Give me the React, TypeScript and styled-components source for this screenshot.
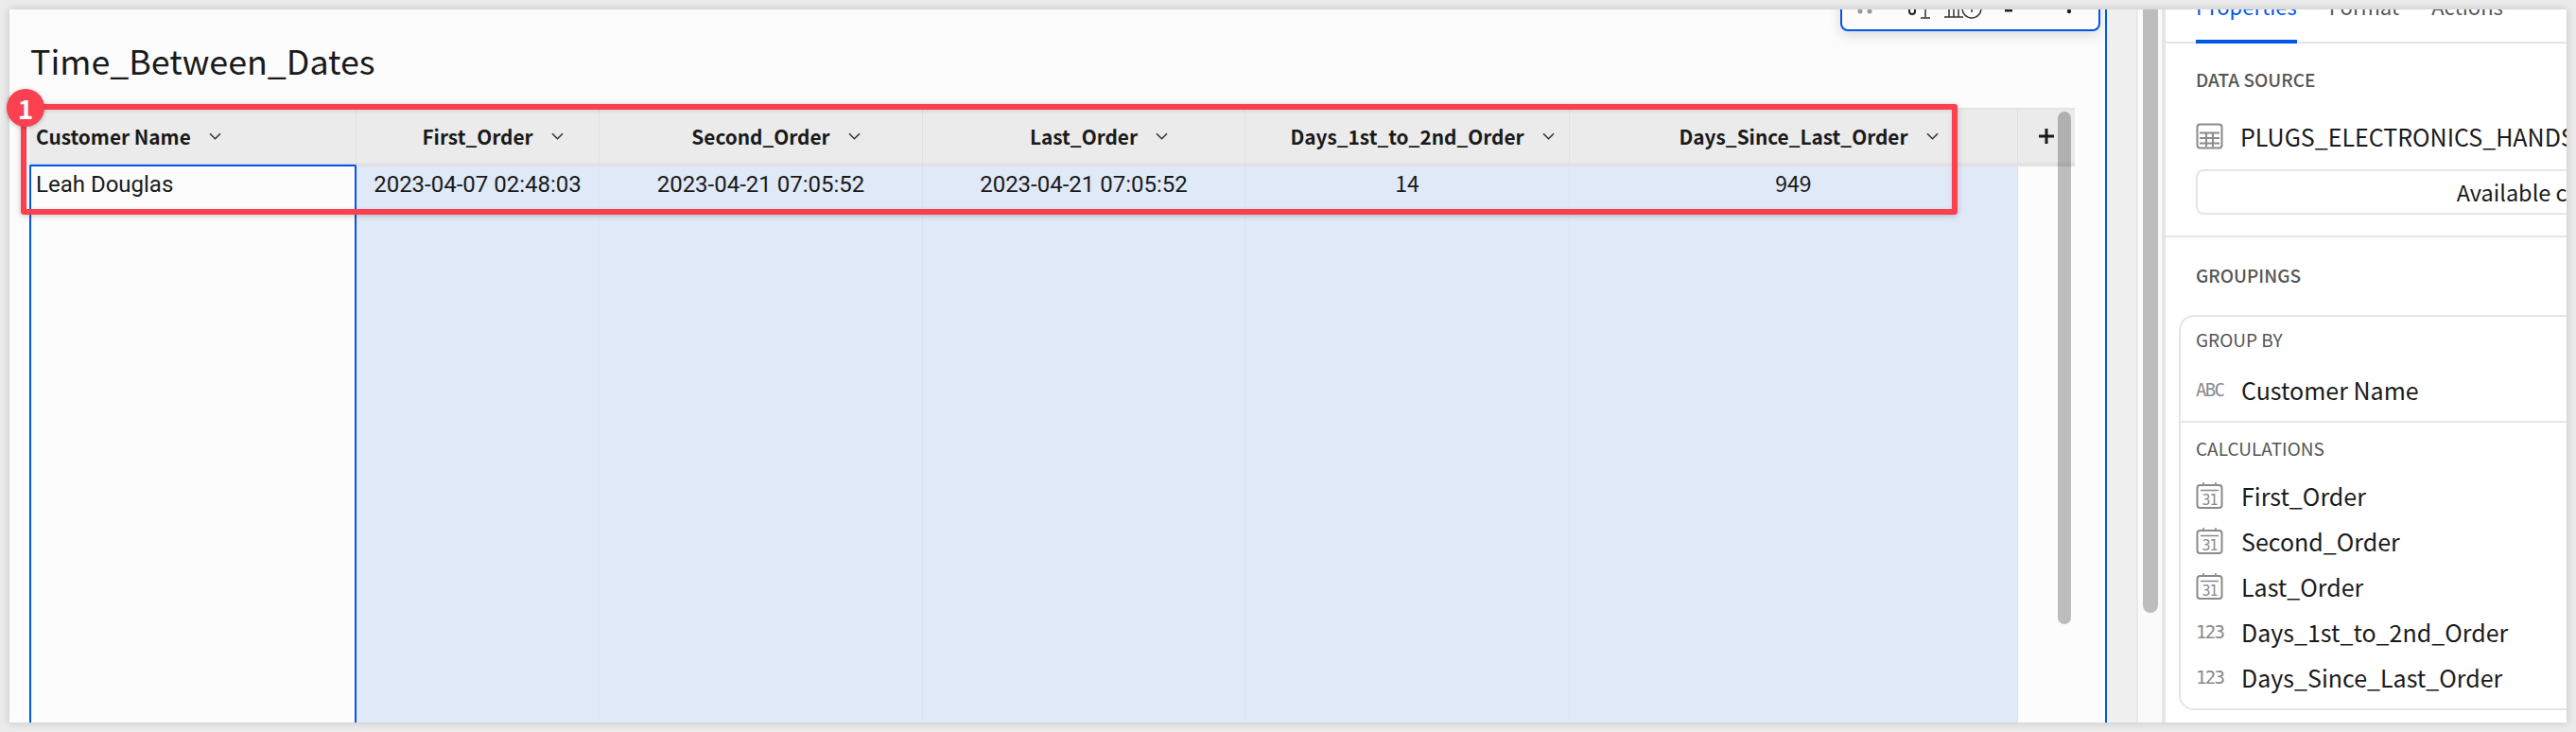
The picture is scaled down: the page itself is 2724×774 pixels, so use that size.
import React from 'react';
import styled, { createGlobalStyle } from 'styled-components';

const UI_FONT = '"Noto Sans CJK JP", "Noto Sans", sans-serif';
const BLUE = '#0057e7';
const RED = '#fb4050';
const ICON_GRAY = '#8a8a8a';
const LINE = '#e5e5e5';

const GlobalStyle = createGlobalStyle`
  html, body {
    margin: 0;
    padding: 0;
    background: #ebebeb;
    font-family: ${UI_FONT};
    color: #1a1a1a;
  }
`;

const Page = styled.div`
  box-sizing: border-box;
  width: 2724px;
  height: 774px;
  padding: 10px;
  overflow: hidden;
`;

const Frame = styled.div`
  position: relative;
  display: flex;
  width: 2704px;
  height: 754px;
  box-shadow: 0 0 8px rgba(0, 0, 0, 0.18);
`;

const Canvas = styled.div`
  position: relative;
  box-sizing: border-box;
  width: 2218px;
  padding-left: 21px;
  background: #fcfcfc;
  border-right: 2px solid ${BLUE};
  overflow: hidden;
`;

const Toolbar = styled.div`
  position: absolute;
  left: 1936px;
  top: -40px;
  box-sizing: border-box;
  width: 275px;
  height: 63px;
  background: #fcfcfc;
  border: 2px solid ${BLUE};
  border-radius: 8px;
  box-shadow: 0 4px 14px rgba(0, 0, 0, 0.14);
`;

const Title = styled.h1`
  height: 104px;
  margin: 0;
  padding-left: 1px;
  padding-top: 27px;
  box-sizing: border-box;
  font-size: 35.8px;
  line-height: 52px;
  font-weight: 400;
  white-space: nowrap;
`;

const Table = styled.div`
  position: relative;
  display: grid;
  grid-template-columns: 346px 257px 342px 341px 343px 474px 60px;
  grid-template-rows: 62px 588px;
  width: 2163px;
  box-sizing: border-box;
  border-right: 2px solid #e0e0e0;
`;

const HeaderCell = styled.div<{ $left?: boolean }>`
  display: flex;
  align-items: center;
  justify-content: ${(p) => (p.$left ? 'flex-start' : 'center')};
  box-sizing: border-box;
  padding-left: ${(p) => (p.$left ? '7px' : '0')};
  background: #ebebeb;
  border-top: 2px solid #e4e4e4;
  border-bottom: 4px solid #e2e2e2;
  border-right: 1px solid #e0e0e0;
  font-size: 20.8px;
  font-weight: 700;
  white-space: nowrap;
`;

const Chevron = styled.svg`
  flex: none;
  width: 13px;
  height: 8px;
  margin-left: 19px;
  margin-right: -32px;
  fill: none;
  stroke: #333;
  stroke-width: 1.6;
`;

const AddCell = styled(HeaderCell)`
  border-right: none;
  svg {
    width: 16px;
    height: 16px;
    stroke: #1a1a1a;
    stroke-width: 3;
  }
`;

const BodyCell = styled.div<{ $selected?: boolean; $empty?: boolean }>`
  box-sizing: border-box;
  padding-top: 5px;
  background: ${(p) => (p.$selected || p.$empty ? '#fcfcfc' : '#e0e9f8')};
  border-right: 1px solid ${(p) => (p.$empty ? 'transparent' : '#dde3ee')};
  text-align: center;
  font-family: Roboto, sans-serif;
  font-size: 24px;
  line-height: 28px;
  white-space: nowrap;
  ${(p) =>
    p.$selected &&
    `
    margin-top: -2px;
    padding: 5px 0 0 5px;
    text-align: left;
    border: 2px solid ${BLUE};
    border-bottom: none;
    border-radius: 2px 2px 0 0;
  `}
`;

const NumberCell = styled(BodyCell)`
  padding-top: 3px;
  font-family: ${UI_FONT};
  font-size: 23px;
`;

const TableScroll = styled.div`
  position: absolute;
  top: 4px;
  right: 2px;
  width: 14px;
  height: 542px;
  border-radius: 7px;
  background: rgba(0, 0, 0, 0.25);
`;

const Highlight = styled.div`
  position: absolute;
  left: 12px;
  top: 100px;
  box-sizing: border-box;
  width: 2048px;
  height: 117px;
  border: 6px solid ${RED};
  border-radius: 3px;
  box-shadow: 0 1px 6px rgba(0, 0, 0, 0.22), inset 0 1px 4px rgba(0, 0, 0, 0.12);
`;

const Badge = styled.div`
  position: absolute;
  left: -3px;
  top: 84px;
  display: flex;
  align-items: center;
  justify-content: center;
  width: 40px;
  height: 40px;
  border-radius: 50%;
  background: ${RED};
  color: #fff;
  font-size: 28px;
  font-weight: 700;
  box-shadow: 0 1px 4px rgba(0, 0, 0, 0.25);
`;

const Gutter = styled.div`
  width: 31px;
  background: #f0f0f0;
  border-right: 2px solid #e8e8e8;
`;

const Rail = styled.div`
  box-sizing: border-box;
  width: 29px;
  padding-left: 5px;
  background: #fafafa;
  border-right: 4px solid ${LINE};
`;

const RailThumb = styled.div`
  width: 16px;
  height: 638px;
  border-radius: 0 0 8px 8px;
  background: #bdbdbd;
`;

const Panel = styled.div`
  width: 424px;
  background: #fff;
  overflow: hidden;
`;

const TabBar = styled.div`
  display: flex;
  gap: 34px;
  height: 34px;
  padding-left: 32px;
  border-bottom: 2px solid ${LINE};
`;

const Tab = styled.div<{ $active?: boolean }>`
  box-sizing: border-box;
  height: 36px;
  border-bottom: 4px solid ${(p) => (p.$active ? BLUE : 'transparent')};
  color: ${(p) => (p.$active ? BLUE : '#555')};
  font-size: 22px;
  line-height: 24px;
  span {
    display: block;
    margin-top: -16px;
  }
`;

const Section = styled.div`
  padding: 26px 0 22px 32px;
  border-bottom: 2px solid ${LINE};
`;

const SectionLabel = styled.div`
  color: #555;
  font-size: 19px;
  font-weight: 500;
  line-height: 24px;
`;

const SourceRow = styled.div`
  display: flex;
  align-items: center;
  gap: 18px;
  height: 30px;
  margin-top: 33px;
  font-size: 25px;
  white-space: nowrap;
`;

const AvailableButton = styled.div`
  box-sizing: border-box;
  width: 750px;
  height: 48px;
  margin-top: 20px;
  border: 2px solid ${LINE};
  border-radius: 8px;
  text-align: center;
  font-size: 23.5px;
  line-height: 44px;
`;

const Groupings = styled.div`
  padding: 28px 0 0 14px;
`;

const GroupingsTitle = styled(SectionLabel)`
  margin-left: 18px;
`;

const GroupBox = styled.div`
  box-sizing: border-box;
  width: 900px;
  height: 418px;
  margin-top: 30px;
  border: 2px solid ${LINE};
  border-radius: 16px;
`;

const GroupPart = styled.div<{ $divided?: boolean }>`
  padding: ${(p) => (p.$divided ? '15px' : '12px')} 0 0 16px;
  ${(p) => p.$divided && `margin-top: 9px; border-top: 2px solid ${LINE};`}
`;

const GroupLabel = styled.div<{ $gap: number }>`
  margin-bottom: ${(p) => p.$gap}px;
  color: #555;
  font-size: 19px;
  line-height: 24px;
`;

const FieldRow = styled.div`
  display: flex;
  align-items: center;
  gap: 19px;
  height: 48px;
  font-size: 25px;
  white-space: nowrap;
`;

const TypeGlyph = styled.span`
  flex: none;
  width: 29px;
  color: ${ICON_GRAY};
  font-family: "DejaVu Sans Mono", monospace;
  font-size: 19px;
  letter-spacing: -1.7px;
  line-height: 20px;
`;

const IconSvg = styled.svg`
  flex: none;
  width: 29px;
  height: 28px;
  fill: none;
  stroke: ${ICON_GRAY};
  stroke-width: 2;
  text {
    fill: ${ICON_GRAY};
    stroke: none;
    font-family: "DejaVu Sans Mono", monospace;
    font-size: 15px;
    letter-spacing: -1px;
  }
`;

const ChevronDown = () => (
  <Chevron viewBox="0 0 13 8">
    <path d="M1 1.2 6.5 6.7 12 1.2" />
  </Chevron>
);

const TableIcon = () => (
  <IconSvg viewBox="0 0 29 28">
    <rect x="1.5" y="1.5" width="26" height="25" rx="3" />
    <path d="M4 10.5h21M4 16h21M4 21.5h21M11 10.5v15M18 10.5v15" />
  </IconSvg>
);

const CalendarIcon = () => (
  <IconSvg viewBox="0 0 29 28">
    <rect x="1.5" y="3" width="26" height="24" rx="3" />
    <path d="M8 0v4M21 0v4M5 8.5h19" strokeWidth="1.6" />
    <text x="6.5" y="24">31</text>
  </IconSvg>
);

const TypeIcon = ({ kind }: { kind: string }) => {
  if (kind === 'date') return <CalendarIcon />;
  return <TypeGlyph>{kind}</TypeGlyph>;
};

const columns = [
  { name: 'First_Order', value: '2023-04-07 02:48:03' },
  { name: 'Second_Order', value: '2023-04-21 07:05:52' },
  { name: 'Last_Order', value: '2023-04-21 07:05:52' },
  { name: 'Days_1st_to_2nd_Order', value: '14', numeric: true },
  { name: 'Days_Since_Last_Order', value: '949', numeric: true },
];

const calculations = [
  { name: 'First_Order', kind: 'date' },
  { name: 'Second_Order', kind: 'date' },
  { name: 'Last_Order', kind: 'date' },
  { name: 'Days_1st_to_2nd_Order', kind: '123' },
  { name: 'Days_Since_Last_Order', kind: '123' },
];

export default function App() {
  return (
    <>
      <GlobalStyle />
      <Page>
        <Frame>
          <Canvas>
            <Toolbar>
              <svg width="271" height="59" viewBox="0 0 271 59">
                <g transform="translate(0 66)">
                  <circle cx="19" cy="-26" r="2.5" fill="#999" />
                  <circle cx="29" cy="-26" r="2.5" fill="#999" />
                  <path d="M71-32v6a3 3 0 0 0 6 0v-6" fill="none" stroke="#222" strokeWidth="2" />
                  <path d="M88-30v10M83-19h10" fill="none" stroke="#333" strokeWidth="1.5" />
                  <path d="M113-30v10M118-30v10M123-30v10M108-20h20" fill="none" stroke="#333" strokeWidth="1.5" />
                  <circle cx="137" cy="-29" r="10" fill="none" stroke="#333" strokeWidth="1.5" />
                  <path d="M137-32v7" fill="none" stroke="#333" strokeWidth="1.5" />
                  <path d="M172-27h8" fill="none" stroke="#222" strokeWidth="3" />
                  <circle cx="240" cy="-26" r="2.2" fill="#222" />
                </g>
              </svg>
            </Toolbar>
            <Title>Time_Between_Dates</Title>
            <Table>
              <HeaderCell $left>
                Customer Name
                <ChevronDown />
              </HeaderCell>
              {columns.map((c) => (
                <HeaderCell key={c.name}>
                  {c.name}
                  <ChevronDown />
                </HeaderCell>
              ))}
              <AddCell>
                <svg viewBox="0 0 16 16" fill="none">
                  <path d="M8 0v16M0 8h16" />
                </svg>
              </AddCell>
              <BodyCell $selected>Leah Douglas</BodyCell>
              {columns.map((c) =>
                c.numeric ? (
                  <NumberCell key={c.name}>{c.value}</NumberCell>
                ) : (
                  <BodyCell key={c.name}>{c.value}</BodyCell>
                ),
              )}
              <BodyCell $empty />
              <TableScroll />
            </Table>
          </Canvas>
          <Gutter />
          <Rail>
            <RailThumb />
          </Rail>
          <Panel>
            <TabBar>
              <Tab $active>
                <span>Properties</span>
              </Tab>
              <Tab>
                <span>Format</span>
              </Tab>
              <Tab>
                <span>Actions</span>
              </Tab>
            </TabBar>
            <Section>
              <SectionLabel>DATA SOURCE</SectionLabel>
              <SourceRow>
                <TableIcon />
                PLUGS_ELECTRONICS_HANDS_ON_LAB
              </SourceRow>
              <AvailableButton>Available columns</AvailableButton>
            </Section>
            <Groupings>
              <GroupingsTitle>GROUPINGS</GroupingsTitle>
              <GroupBox>
                <GroupPart>
                  <GroupLabel $gap={17}>GROUP BY</GroupLabel>
                  <FieldRow>
                    <TypeIcon kind="ABC" />
                    Customer Name
                  </FieldRow>
                </GroupPart>
                <GroupPart $divided>
                  <GroupLabel $gap={14}>CALCULATIONS</GroupLabel>
                  {calculations.map((f) => (
                    <FieldRow key={f.name}>
                      <TypeIcon kind={f.kind} />
                      {f.name}
                    </FieldRow>
                  ))}
                </GroupPart>
              </GroupBox>
            </Groupings>
          </Panel>
          <Highlight />
          <Badge>1</Badge>
        </Frame>
      </Page>
    </>
  );
}
